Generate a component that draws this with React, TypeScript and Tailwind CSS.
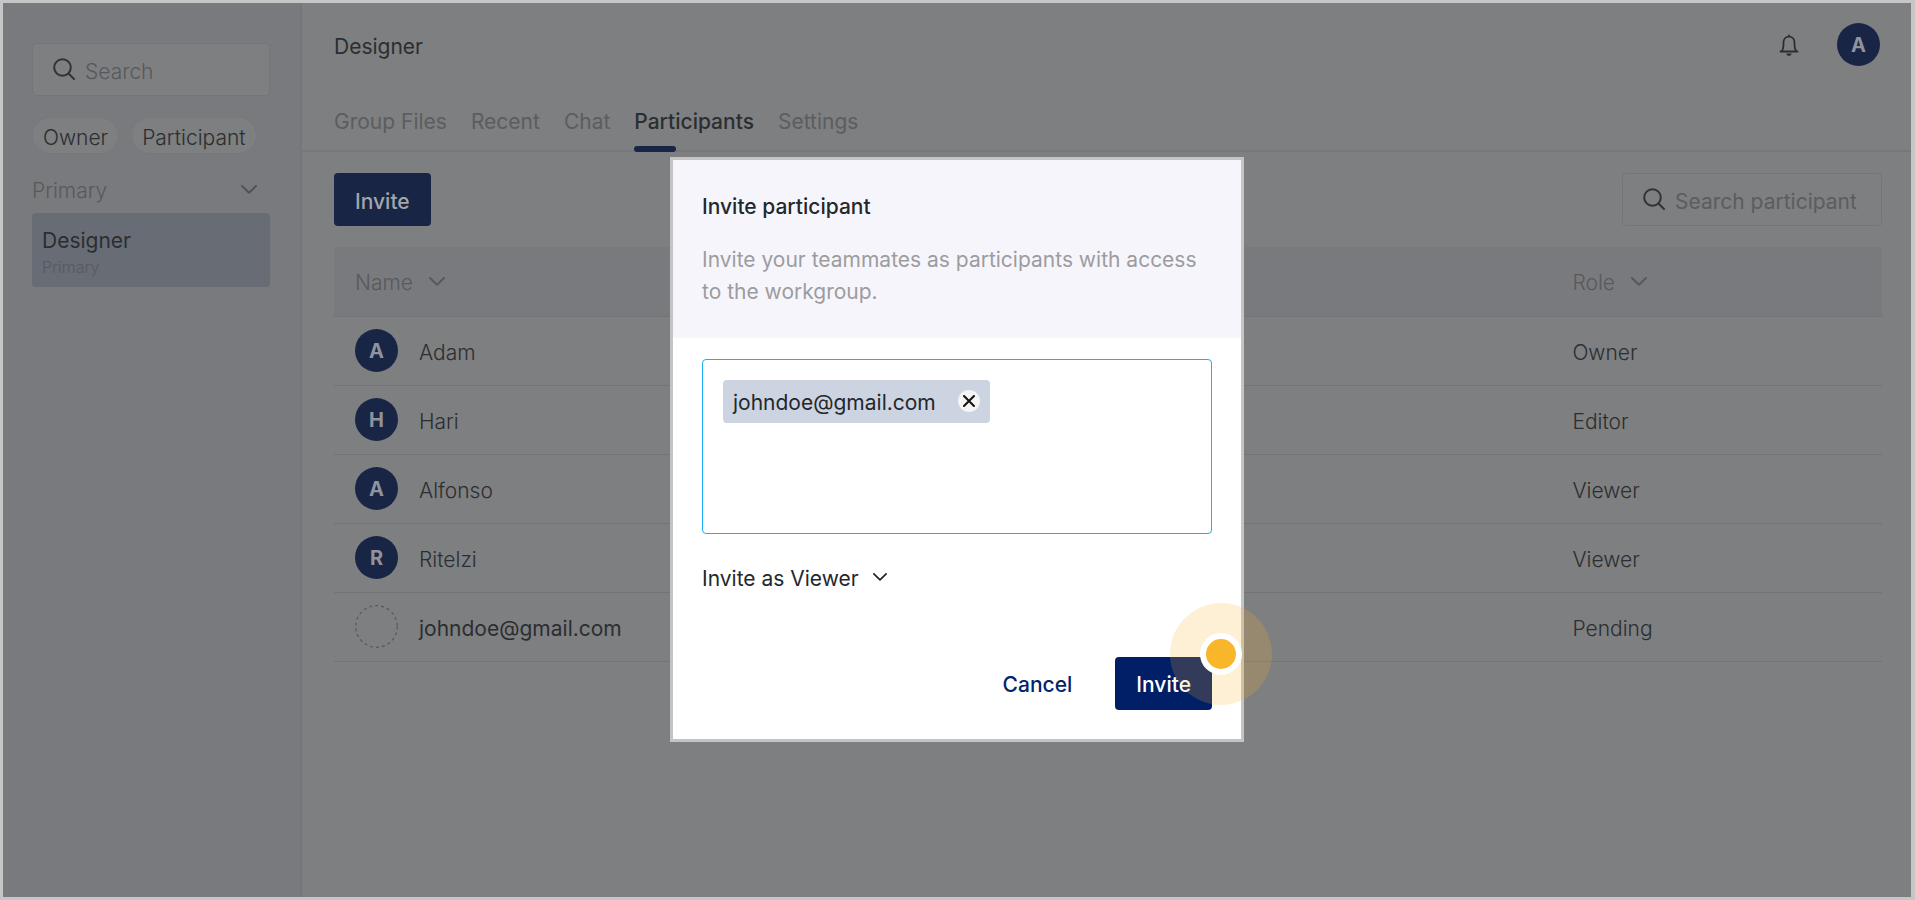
import { clsx } from "clsx";

interface Participant {
  name: string;
  role: string;
  pending?: boolean;
}

const participants: Participant[] = [
  { name: "Adam", role: "Owner" },
  { name: "Hari", role: "Editor" },
  { name: "Alfonso", role: "Viewer" },
  { name: "Ritelzi", role: "Viewer" },
  { name: "johndoe@gmail.com", role: "Pending", pending: true },
];

const tabs = ["Group Files", "Recent", "Chat", "Participants", "Settings"];

const SearchIcon = () => (
  <svg aria-hidden="true" className="size-6 shrink-0" fill="none" stroke="#303235" strokeWidth="2" viewBox="0 0 24 24">
    <circle cx="9.5" cy="9.5" r="8.3" />
    <path d="M15.5 15.5l5.5 5.5" strokeLinecap="round" />
  </svg>
);

const BellIcon = () => (
  <svg aria-hidden="true" className="h-6 w-5" fill="none" stroke="#2b2e31" strokeWidth="1.8" viewBox="0 0 20 24">
    <path d="M1.5 18.5h17M3 18c1.200-2 1.500-4 1.500-6.500V9.500c0-3.500 2.200-5.800 5.500-5.800s5.500 2.300 5.500 5.800v2c0 2.500.3 4.500 1.500 6.500M10 3.700V2.300" strokeLinecap="round" strokeLinejoin="round" />
    <path d="M7.300 20.500h5.400c-.4 1.600-1.300 2.300-2.700 2.300s-2.300-.7-2.700-2.300Z" fill="#2b2e31" stroke="none" />
  </svg>
);

const ChevronIcon = ({ className }: { className?: string }) => (
  <svg aria-hidden="true" className={clsx("shrink-0", className)} fill="none" stroke="currentColor" strokeWidth="2" viewBox="0 0 16 9">
    <path d="M1 1l7 6.800L15 1" strokeLinecap="round" strokeLinejoin="round" />
  </svg>
);

const Avatar = ({ letter }: { letter: string }) => (
  <span className="flex size-[43px] shrink-0 items-center justify-center rounded-full bg-[#182545] text-xl font-bold text-[#8f939b]">
    {letter}
  </span>
);

const Sidebar = () => (
  <aside className="flex w-[299px] shrink-0 flex-col border-r-2 border-[#757679] bg-[#797a7d] pl-[29px] pr-[30px] pt-10">
    <label className="flex h-[53px] items-center gap-2 rounded border border-[#747578] bg-[#7e7f80] pl-5">
      <SearchIcon />
      <input
        aria-label="Search"
        className="w-full min-w-0 bg-transparent pt-1 outline-none placeholder:text-[#57595c]"
        placeholder="Search"
      />
    </label>
    <div className="mt-[21px] flex gap-3">
      <button className="h-[37px] rounded-full border border-[#77787b] bg-[#7e7f80] px-2.5 pt-1">Owner</button>
      <button className="h-[37px] rounded-full border border-[#77787b] bg-[#7e7f80] px-2.5 pt-1">Participant</button>
    </div>
    <button className="mt-[21px] flex h-8 items-center justify-between pr-[13px] text-[#57595c]">
      Primary
      <ChevronIcon className="mb-1 h-[9px] w-4 text-[#505256]" />
    </button>
    <a className="mt-1.5 flex h-[74px] flex-col justify-center rounded bg-[#686c75] px-2.5 pt-1.5" href="#designer">
      <span className="font-normal leading-7">Designer</span>
      <span className="text-base leading-6 text-[#57595d]">Primary</span>
    </a>
  </aside>
);

const Header = () => (
  <header className="flex h-[149px] flex-col justify-between border-b-2 border-[#77787b] pl-8 pr-[31px] pt-5">
    <div className="flex items-center justify-between">
      <h1 className="pt-1 font-normal">Designer</h1>
      <div className="flex items-center gap-[38px]">
        <button aria-label="Notifications">
          <BellIcon />
        </button>
        <Avatar letter="A" />
      </div>
    </div>
    <nav className="flex gap-6 font-normal">
      {tabs.map((tab) => {
        const active = tab === "Participants";
        return (
          <a
            className={clsx("relative h-11", active ? "font-medium text-[#2b2e31]" : "text-[#5b5d60]")}
            href="#tab"
            key={tab}
          >
            {tab}
            {active && <span className="absolute -bottom-0.5 left-0 h-1.5 w-[42px] rounded-sm bg-[#182545]" />}
          </a>
        );
      })}
    </nav>
  </header>
);

const ParticipantsTable = () => (
  <table className="mt-[21px] w-full table-fixed border-collapse text-left">
    <thead>
      <tr className="h-[69px] border-b border-[#737477] bg-[#797a7d] text-[#57595c]">
        <th className="w-4/5 pl-[21px] pt-1 font-light">
          <button className="flex items-center gap-4">
            Name
            <ChevronIcon className="mb-1 h-[9px] w-4" />
          </button>
        </th>
        <th className="pt-1 font-light">
          <button className="flex items-center gap-4">
            Role
            <ChevronIcon className="mb-1 h-[9px] w-4" />
          </button>
        </th>
      </tr>
    </thead>
    <tbody>
      {participants.map(({ name, pending, role }) => (
        <tr className="h-[69px] border-b border-[#737477]" key={name}>
          <td className="pl-[21px]">
            <div className="flex items-center gap-[21px]">
              {pending ? (
                <svg aria-hidden="true" className="size-[43px] shrink-0" fill="none" viewBox="0 0 43 43">
                  <circle cx="21.5" cy="21.5" r="20.8" stroke="#55575a" strokeDasharray="3 3" strokeWidth="1.2" />
                </svg>
              ) : (
                <Avatar letter={name[0]} />
              )}
              <span className={clsx("pt-1", pending && "font-normal")}>{name}</span>
            </div>
          </td>
          <td className="pt-1">{role}</td>
        </tr>
      ))}
    </tbody>
  </table>
);

const InviteDialog = () => (
  <div
    aria-labelledby="invite-title"
    aria-modal="true"
    className="relative w-[574px] border-3 border-[#c4c4c5] bg-white text-[#23282c]"
    role="dialog"
  >
    <div className="h-[178px] bg-[#f6f5fc] px-[29px] pt-[31px] font-normal">
      <h2 className="font-medium leading-8" id="invite-title">
        Invite participant
      </h2>
      <p className="mt-[21px] leading-8 text-[#9c9c9f]">
        Invite your teammates as participants with access to the workgroup.
      </p>
    </div>
    <form className="px-[29px] pb-[29px] pt-[21px]">
      <div className="flex h-[175px] flex-wrap content-start items-start gap-2 rounded border border-[#1ab0f7] p-5">
        <span className="flex h-[43px] w-[267px] items-center justify-between rounded bg-[#ccd3e1] px-2.5">
          <span className="pt-1 font-normal">johndoe@gmail.com</span>
          <button
            aria-label="Remove johndoe@gmail.com"
            className="flex size-[22px] items-center justify-center rounded-full bg-[#f4f4f4]"
            type="button"
          >
            <svg aria-hidden="true" className="size-3" stroke="#111" strokeWidth="2" viewBox="0 0 12 12">
              <path d="M1 1l10 10M11 1L1 11" strokeLinecap="round" />
            </svg>
          </button>
        </span>
        <input aria-label="Email addresses" className="h-[43px] min-w-0 flex-1 outline-none" />
      </div>
      <div className="mt-[29px] flex items-center gap-3.5">
        <select aria-label="Role for the invitation" className="h-8 appearance-none bg-transparent font-normal">
          <option>Invite as Viewer</option>
        </select>
        <ChevronIcon className="mb-1 h-2 w-3.5" />
      </div>
      <div className="mt-[62px] flex items-center justify-end gap-[43px]">
        <button className="pt-1 font-medium text-[#04246a]" type="button">
          Cancel
        </button>
        <button className="h-[53px] rounded bg-[#001f66] px-[21px] pt-1 font-medium text-white" type="button">
          Invite
        </button>
      </div>
    </form>
    {/* click hotspot over the corner of the primary button */}
    <span className="pointer-events-none absolute -right-[31px] bottom-[34px] flex size-[102px] items-center justify-center rounded-full bg-[#f9b62b]/20">
      <span className="size-[42px] rounded-full border-6 border-white bg-[#f9b62b]" />
    </span>
  </div>
);

const App = () => {
  return (
    <div className="flex min-h-screen border-3 border-r-4 border-[#c6c6c7] bg-[#7e7f80] font-['Inter',sans-serif] text-[21px] font-light leading-8 text-[#2b2e31]">
      <Sidebar />
      <main className="min-w-0 flex-1">
        <Header />
        <section className="pl-8 pr-[29px] pt-[21px]">
          <div className="flex justify-between">
            <button className="h-[53px] rounded bg-[#182545] px-[21px] pt-1 font-medium text-[#a3a6ac]">Invite</button>
            <label className="flex h-[53px] w-[260px] items-center gap-2 rounded border border-[#747578] pl-5">
              <SearchIcon />
              <input
                aria-label="Search participant"
                className="w-full min-w-0 bg-transparent pt-1 font-normal outline-none placeholder:text-[#5b5d60]"
                placeholder="Search participant"
              />
            </label>
          </div>
          <ParticipantsTable />
        </section>
      </main>
      <div className="fixed inset-0 flex items-center justify-center pb-0.5 pr-px">
        <InviteDialog />
      </div>
    </div>
  );
};

export default App;
